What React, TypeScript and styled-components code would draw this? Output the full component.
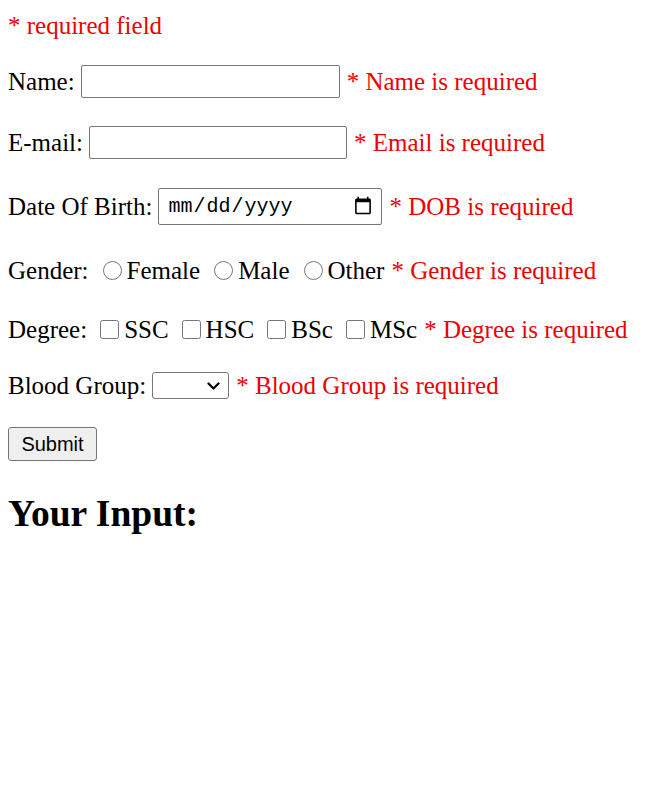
import React from "react";
import styled, { createGlobalStyle } from "styled-components";

const Global = createGlobalStyle`
  html, body { margin: 0; padding: 0; background: #fff; }
  body { font-family: "Liberation Serif", "Times New Roman", serif; font-size: 25px; color: #000; }
`;

const Page = styled.div`
  padding: 0 8px;
  display: flex;
  flex-direction: column;
`;

const Row = styled.div<{ $top: number; $h?: number }>`
  display: flex;
  align-items: center;
  height: ${(p) => p.$h ?? 40}px;
  margin-top: ${(p) => p.$top}px;
  white-space: pre;
  line-height: 1;
`;

const Label = styled.span`
  margin-right: 6px;
`;

const Err = styled.span<{ $ml?: number }>`
  color: #ee0000;
  margin-left: ${(p) => p.$ml ?? 7}px;
`;

const TextInput = styled.input<{ $w: number }>`
  box-sizing: border-box;
  width: ${(p) => p.$w}px;
  height: 33px;
  border: 1px solid #767676;
  border-radius: 2px;
  padding: 0 4px;
  margin: 0;
  font-size: 20px;
  background: #fff;
`;

const DateInput = styled.input`
  box-sizing: border-box;
  width: 224px;
  height: 37px;
  border: 1px solid #767676;
  border-radius: 2px;
  padding: 0 6px 0 8px;
  margin: 0;
  font-family: "Liberation Mono", "Courier New", monospace;
  font-size: 20px;
  color: #000;
  background: #fff;
`;

const Choice = styled.input<{ $ml: number }>`
  width: 19px;
  height: 19px;
  margin: 0 5px 0 ${(p) => p.$ml}px;
  flex: none;
`;

const SelectWrap = styled.span`
  position: relative;
  display: inline-flex;
  width: 77px;
  height: 27px;
`;

const Select = styled.select`
  appearance: none;
  -webkit-appearance: none;
  box-sizing: border-box;
  width: 100%;
  height: 100%;
  border: 1px solid #767676;
  border-radius: 3px;
  background: #fff;
  font-size: 18px;
  margin: 0;
  padding: 0 24px 0 4px;
`;

const Chevron = styled.svg`
  position: absolute;
  right: 9px;
  top: 10px;
  width: 13px;
  height: 8px;
  pointer-events: none;
`;

const Button = styled.button`
  box-sizing: border-box;
  width: 89px;
  height: 34px;
  font-family: "Liberation Sans", Arial, sans-serif;
  font-size: 20px;
  background: #efefef;
  border: 1px solid #767676;
  border-radius: 3px;
  color: #000;
  padding: 0;
  margin: 0;
`;

const Heading = styled.h2`
  font-size: 37.5px;
  font-weight: bold;
  margin: 0;
  line-height: 1;
  height: 40px;
  display: flex;
  align-items: center;
`;

const Note = styled.span`
  color: #ee0000;
`;

export default function App() {
  return (
    <>
      <Global />
      <Page>
        <Row $top={5}>
          <Note>* required field</Note>
        </Row>
        <Row $top={16}>
          <Label>Name:</Label>
          <TextInput type="text" $w={259} />
          <Err>* Name is required</Err>
        </Row>
        <Row $top={21}>
          <Label>E-mail:</Label>
          <TextInput type="text" $w={258} />
          <Err>* Email is required</Err>
        </Row>
        <Row $top={24}>
          <Label>Date Of Birth:</Label>
          <DateInput type="date" />
          <Err>* DOB is required</Err>
        </Row>
        <Row $top={24}>
          <span>Gender:</span>
          <Choice type="radio" name="g" $ml={14} />
          <span>Female</span>
          <Choice type="radio" name="g" $ml={14} />
          <span>Male</span>
          <Choice type="radio" name="g" $ml={14} />
          <span>Other</span>
          <Err>* Gender is required</Err>
        </Row>
        <Row $top={19}>
          <span>Degree:</span>
          <Choice type="checkbox" $ml={13} />
          <span>SSC</span>
          <Choice type="checkbox" $ml={13} />
          <span>HSC</span>
          <Choice type="checkbox" $ml={13} />
          <span>BSc</span>
          <Choice type="checkbox" $ml={13} />
          <span>MSc</span>
          <Err>* Degree is required</Err>
        </Row>
        <Row $top={16}>
          <Label>Blood Group:</Label>
          <SelectWrap>
            <Select defaultValue="">
              <option value=""></option>
              <option value="A+">A+</option>
              <option value="B+">B+</option>
              <option value="O+">O+</option>
              <option value="AB+">AB+</option>
            </Select>
            <Chevron viewBox="0 0 13 8" aria-hidden="true">
              <path d="M1.5 1.5 L6.5 6.5 L11.5 1.5" fill="none" stroke="#000" strokeWidth="2.2" strokeLinecap="round" strokeLinejoin="round" />
            </Chevron>
          </SelectWrap>
          <Err>* Blood Group is required</Err>
        </Row>
        <Row $top={19}>
          <Button type="button">Submit</Button>
        </Row>
        <Row $top={30}>
          <Heading>Your Input:</Heading>
        </Row>
      </Page>
    </>
  );
}
